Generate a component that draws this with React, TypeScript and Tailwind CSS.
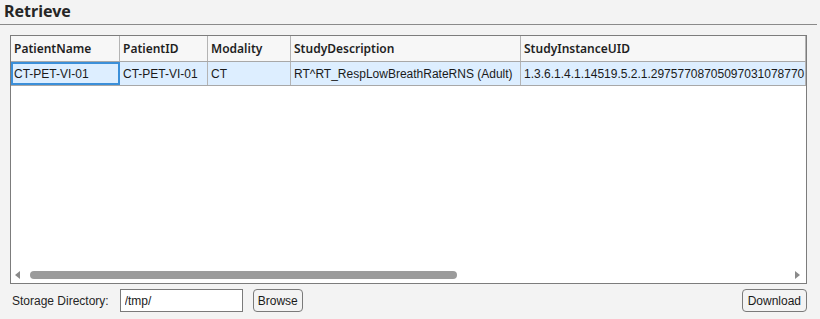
import { useState } from "react";

const columns = [
  { key: "PatientName", width: 109 },
  { key: "PatientID", width: 88 },
  { key: "Modality", width: 83 },
  { key: "StudyDescription", width: 230 },
  { key: "StudyInstanceUID", width: 285 },
];

const rows = [
  {
    PatientName: "CT-PET-VI-01",
    PatientID: "CT-PET-VI-01",
    Modality: "CT",
    StudyDescription: "RT^RT_RespLowBreathRateRNS (Adult)",
    StudyInstanceUID: "1.3.6.1.4.1.14519.5.2.1.29757708705097031078770",
  },
];

export default function App() {
  const [dir, setDir] = useState("/tmp/");

  return (
    <div className="h-[319px] w-[820px] overflow-hidden bg-[#f3f3f3] font-['Liberation_Sans',Arial,sans-serif] text-[12px] text-[#1a1a1a]">
      <div className="mr-[3px] border-b border-[#8a8a8a] px-[4px] pt-[1px] pb-[3px]">
        <h1 className="font-['Noto_Sans',sans-serif] text-[16px] font-bold leading-[20px] text-[#262626]">
          Retrieve
        </h1>
      </div>

      <div className="ml-[10px] mt-[10px] flex h-[249px] w-[797px] flex-col border border-[#7c7c7c] bg-white">
        <div className="flex-1 overflow-hidden">
          <div className="flex h-[26px] border-b border-[#a8a8a8] bg-[#f7f7f7]">
            {columns.map((c) => (
              <div
                key={c.key}
                style={{ width: c.width }}
                className="flex shrink-0 items-center border-r border-[#b4b4b4] px-[3px] font-['Noto_Sans',sans-serif] text-[12px] font-semibold text-[#1f1f1f]"
              >
                {c.key}
              </div>
            ))}
          </div>
          {rows.map((r, i) => (
            <div key={i} className="flex h-[24px] border-b border-[#a8a8a8] bg-[#ddeeff]">
              {columns.map((c, j) => (
                <div
                  key={c.key}
                  style={{ width: c.width }}
                  className={
                    j === 0
                      ? "flex shrink-0 items-center overflow-hidden whitespace-nowrap border-2 border-[#3b8fd9] px-[1px]"
                      : "flex shrink-0 items-center overflow-hidden whitespace-nowrap border-r border-[#b4b4b4] px-[3px]"
                  }
                >
                  {r[c.key as keyof typeof r]}
                </div>
              ))}
            </div>
          ))}
        </div>

        <div className="flex h-[14px] items-center px-[4px] pb-[2px]">
          <svg width="6" height="8" viewBox="0 0 6 8" className="shrink-0">
            <path d="M5 0 L0 4 L5 8 Z" fill="#8a8a8a" />
          </svg>
          <div className="ml-[9px] h-[8px] w-[427px] rounded-full bg-[#9b9b9b]" />
          <div className="flex-1" />
          <svg width="6" height="8" viewBox="0 0 6 8" className="mr-[2px] shrink-0">
            <path d="M1 0 L6 4 L1 8 Z" fill="#8a8a8a" />
          </svg>
        </div>
      </div>

      <div className="mt-[5px] flex h-[23px] items-center pl-[12px] pr-[13px]">
        <span className="text-[12px] text-[#262626]">Storage Directory:</span>
        <input
          value={dir}
          onChange={(e) => setDir(e.target.value)}
          className="ml-[11px] h-[23px] w-[123px] border border-[#7a7a7a] bg-white px-[4px] text-[12px] text-[#1a1a1a] outline-none"
        />
        <button className="ml-[10px] h-[23px] rounded-[4px] border border-[#7a7a7a] bg-[#f3f3f3] px-[4px] text-[12px] text-[#1a1a1a]">
          Browse
        </button>
        <div className="flex-1" />
        <button className="h-[23px] rounded-[4px] border border-[#7a7a7a] bg-[#f3f3f3] px-[5px] text-[12px] text-[#1a1a1a]">
          Download
        </button>
      </div>
    </div>
  );
}
